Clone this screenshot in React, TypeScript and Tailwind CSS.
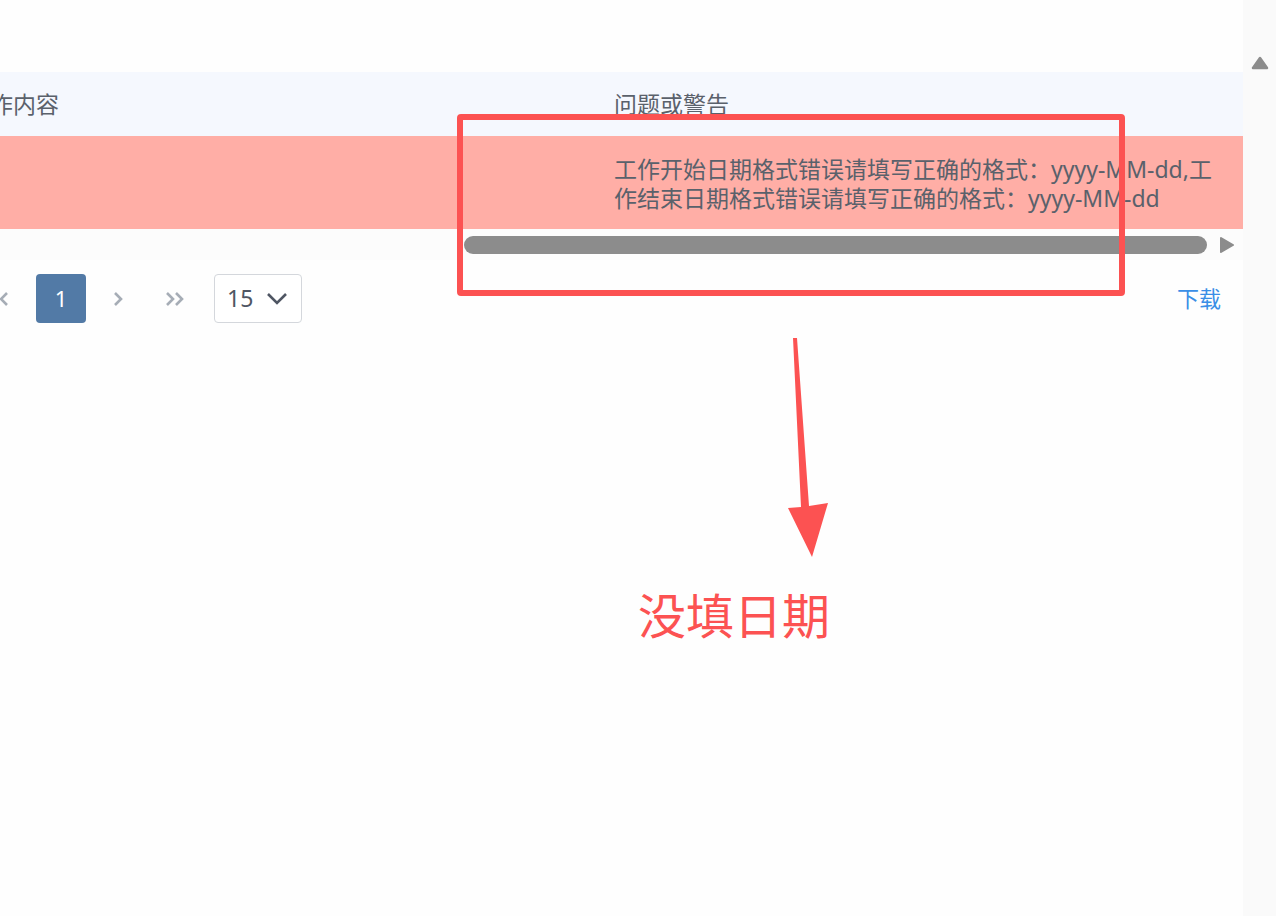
import React from "react";

const font = { fontFamily: '"Noto Sans", "Noto Sans CJK SC", sans-serif' };

function App() {
  return (
    <div
      className="relative flex h-[916px] w-[1276px] overflow-hidden bg-[#fefefe] text-[#5a616b]"
      style={font}
    >
      {/* main */}
      <div className="flex w-[1243px] flex-col pt-[72px]">
        <div className="overflow-hidden">
          {/* header */}
          <div className="flex h-[64px] items-center bg-[#f5f8fe] text-[23px]">
            <div className="ml-[-33px] w-[647px] shrink-0">工作内容</div>
            <div>问题或警告</div>
          </div>
          {/* error row */}
          <div className="flex h-[93px] items-center bg-[#ffaea6] text-[23px] leading-[29px]">
            <div className="w-[614px] shrink-0"></div>
            <div className="pt-[3px]">
              工作开始日期格式错误请填写正确的格式：yyyy-MM-dd,工
              <br />
              作结束日期格式错误请填写正确的格式：yyyy-MM-dd
            </div>
          </div>
          {/* horizontal scrollbar */}
          <div className="flex h-[31px] items-center bg-[#fcfcfc] pl-[464px] pr-[9px]">
            <div className="mt-[1px] h-[18px] flex-1 rounded-full bg-[#8c8c8c]"></div>
            <svg className="ml-[13px] mt-[1px]" width="14" height="18" viewBox="0 0 14 18">
              <path d="M1 2 L13 9 L1 16 Z" fill="#8c8c8c" stroke="#8c8c8c" strokeLinejoin="round" strokeWidth="2" />
            </svg>
          </div>
        </div>

        {/* pagination */}
        <div className="mt-[14px] flex h-[49px] items-center">
          <svg className="ml-[-2px]" width="12" height="16" viewBox="0 0 12 16">
            <path d="M9 2 L3 8 L9 14" fill="none" stroke="#a6adb6" strokeWidth="2.6" />
          </svg>
          <div className="ml-[26px] flex h-[49px] w-[50px] items-center justify-center rounded-[4px] bg-[#527aa6] text-[22px] text-white">
            1
          </div>
          <svg className="ml-[26px]" width="12" height="16" viewBox="0 0 12 16">
            <path d="M3 2 L9 8 L3 14" fill="none" stroke="#a6adb6" strokeWidth="2.6" />
          </svg>
          <svg className="ml-[40px]" width="22" height="16" viewBox="0 0 22 16">
            <path d="M3 2 L9 8 L3 14 M12 2 L18 8 L12 14" fill="none" stroke="#a6adb6" strokeWidth="2.6" />
          </svg>
          <div className="ml-[28px] flex h-[49px] w-[88px] items-center rounded-[4px] border border-[#d4d7dc] bg-white pl-[12px] text-[23px] text-[#4f5663]">
            15
            <svg className="ml-[13px]" width="22" height="14" viewBox="0 0 22 14">
              <path d="M2 2 L11 11 L20 2" fill="none" stroke="#4f5663" strokeWidth="2.6" />
            </svg>
          </div>
          <div className="ml-auto mr-[22px] text-[22px] text-[#3a8ee6]">下载</div>
        </div>
      </div>

      {/* vertical scrollbar */}
      <div className="flex w-[33px] flex-col items-center bg-[#fafafa] pt-[56px]">
        <svg width="18" height="14" viewBox="0 0 18 14">
          <path d="M9 2 L16 12 L2 12 Z" fill="#8c8c8c" stroke="#8c8c8c" strokeLinejoin="round" strokeWidth="2.5" />
        </svg>
      </div>

      {/* annotation overlay */}
      <div className="pointer-events-none absolute left-[457px] top-[114px] h-[182px] w-[668px] rounded-[4px] border-[6px] border-[#fc5252]"></div>
      <svg className="pointer-events-none absolute left-0 top-0" width="1276" height="916">
        <polygon
          points="793,338 797,338 809,506 828,503 812,557 788,508 801,507"
          fill="#fc5252"
        />
      </svg>
      <div className="pointer-events-none absolute left-[638px] top-[585px] text-[48px] leading-[62px] text-[#fc5252]">
        没填日期
      </div>
    </div>
  );
}

export default App;
